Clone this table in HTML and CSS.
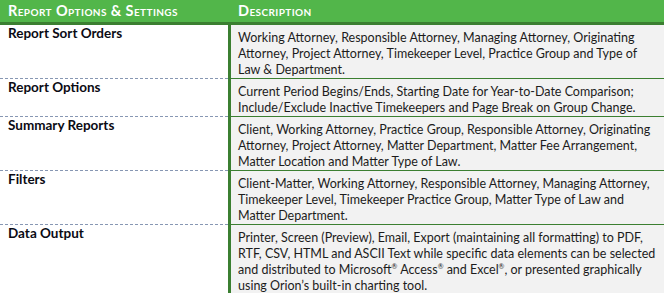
FILE: index.html
```html
<!DOCTYPE html>
<html>
<head>
<meta charset="utf-8">
<link rel="stylesheet" href="styles.css">
</head>
<body>
<div class="table">
  <div class="head head-left">Report Options &amp; Settings</div>
  <div class="head head-right">Description</div>

  <div class="label">Report Sort Orders</div>
  <div class="desc">Working Attorney, Responsible Attorney, Managing Attorney, Originating<br>Attorney, Project Attorney, Timekeeper Level, Practice Group and Type of<br>Law &amp; Department.</div>

  <div class="label">Report Options</div>
  <div class="desc">Current Period Begins/Ends, Starting Date for Year-to-Date Comparison;<br>Include/Exclude Inactive Timekeepers and Page Break on Group Change.</div>

  <div class="label">Summary Reports</div>
  <div class="desc">Client, Working Attorney, Practice Group, Responsible Attorney, Originating<br>Attorney, Project Attorney, Matter Department, Matter Fee Arrangement,<br>Matter Location and Matter Type of Law.</div>

  <div class="label">Filters</div>
  <div class="desc">Client-Matter, Working Attorney, Responsible Attorney, Managing Attorney,<br>Timekeeper Level, Timekeeper Practice Group, Matter Type of Law and<br>Matter Department.</div>

  <div class="label last">Data Output</div>
  <div class="desc last">Printer, Screen (Preview), Email, Export (maintaining all formatting) to PDF,<br>RTF, CSV, HTML and ASCII Text while specific data elements can be selected<br>and distributed to Microsoft<sup>®</sup> Access<sup>®</sup> and Excel<sup>®</sup>, or presented graphically<br>using Orion’s built-in charting tool.</div>
</div>
</body>
</html>
```
FILE: styles.css
```css
html, body {
  margin: 0;
  padding: 0;
  background: #ffffff;
}
body {
  font-family: Lato, "Open Sans", sans-serif;
  font-size: 12.5px;
  color: #111;
}
.table {
  display: grid;
  grid-template-columns: 228px 1fr;
  width: 664px;
}
.head {
  background: #52b64a;
  color: #fff;
  font-weight: bold;
  font-variant: small-caps;
  font-size: 14.5px;
  height: 22px;
  line-height: 22px;
  border-bottom: 3px solid #3b7f31;
  letter-spacing: 0.4px;
}
.head-left {
  padding-left: 8px;
}
.head-right {
  padding-left: 10px;
}
.label {
  font-weight: bold;
  font-size: 13.5px;
  padding: 0 8px;
  line-height: 17px;
  border-bottom: 1px dashed #8797b3;
  color: #0b0b14;
}
.desc {
  background: #f2f2f2;
  border-left: 3px solid #3b7f31;
  border-bottom: 1px solid #3b7f31;
  padding: 5px 0 0 7px;
  line-height: 16px;
  color: #1c1c1c;
  white-space: nowrap;
}
.last {
  border-bottom: none;
}
sup {
  font-size: 7px;
  line-height: 0;
  vertical-align: 5px;
}
```
